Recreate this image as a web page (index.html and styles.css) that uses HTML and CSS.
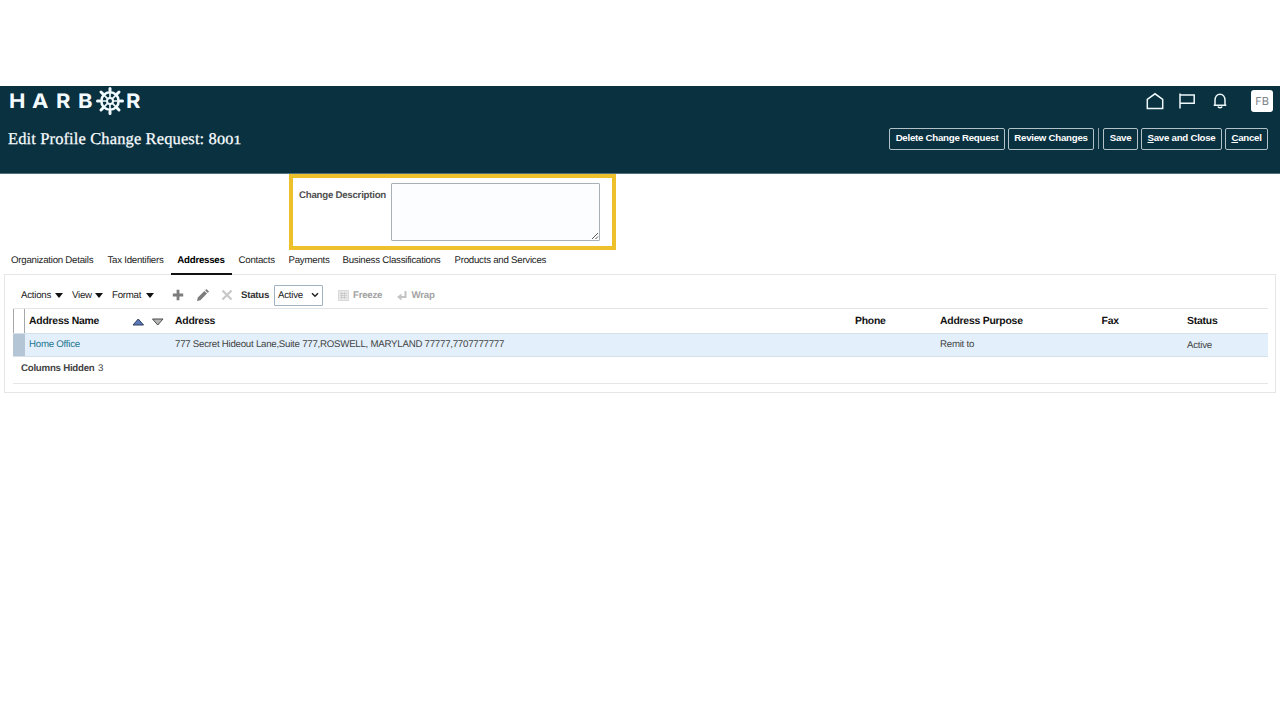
FILE: index.html
```html
<!DOCTYPE html>
<html lang="en">
<head>
<meta charset="utf-8">
<title>Edit Profile Change Request: 8001</title>
<link rel="stylesheet" href="styles.css">
</head>
<body>
<header class="banner">
  <div class="brand-row">
    <div class="logo">
      <span>H</span><span>A</span><span>R</span><span>B</span>
      <svg class="wheel" viewBox="-14 -14 28 28" fill="none" stroke="#f1fbff">
        <circle r="8.7" stroke-width="2.6"/><circle r="3" stroke-width="2"/>
        <path d="M0-13V-3M0 13V3M-13 0H-3M13 0H3M-9.2-9.2l7 7M9.2-9.2l-7 7M-9.2 9.2l7-7M9.2 9.2l-7-7" stroke-width="1.7"/>
        <path d="M0-12.500v2M0 12.500v-2M-12.500 0h2M12.500 0h-2M-9-9l2 2M9-9l-2 2M-9 9l2-2M9 9l-2-2" stroke-width="3" stroke-linecap="round"/>
      </svg>
      <span>R</span>
    </div>
    <nav class="tools">
      <svg class="home" viewBox="0 0 18 18"><path d="M1.3 16.500V7.500L9 1.800l7.700 5.700v9z"/></svg>
      <svg class="flag" viewBox="0 0 18 18"><path d="M2 1.500v15M2 3h14.200v8.200H2"/></svg>
      <svg class="bell" viewBox="0 0 18 18"><path d="M2.700 13.200h12.600M4 13V8.500C4 4.800 6 2.200 9 2.200s5 2.600 5 6.300V13"/><path d="M7 14.500c.3 1.600 3.700 1.600 4 0"/></svg>
      <span class="avatar">FB</span>
    </nav>
  </div>
  <div class="title-row">
    <h1>Edit Profile Change Request: 8<span class="oldstyle">001</span></h1>
    <div class="buttons">
      <button class="w-delete">Delete Change Request</button>
      <button class="w-review">Review Changes</button>
      <i class="separator"></i>
      <button class="w-save">Save</button>
      <button class="w-close"><u>S</u>ave and Close</button>
      <button class="w-cancel"><u>C</u>ancel</button>
    </div>
  </div>
</header>
<section class="description">
  <label for="desc">Change Description</label>
  <div class="field"><textarea id="desc"></textarea>
    <svg class="grip" viewBox="0 0 8 8"><path d="M1 7l6-6M4.500 7L7 4.500"/></svg>
  </div>
</section>
<nav class="tabs">
  <a class="t1">Organization Details</a><a class="t2">Tax Identifiers</a><a class="t3 active">Addresses</a><a class="t4">Contacts</a><a class="t5">Payments</a><a class="t6">Business Classifications</a><a class="t7">Products and Services</a>
</nav>
<main class="panel">
  <div class="toolbar">
    <span class="menu m1">Actions<i></i></span>
    <span class="menu m2">View<i></i></span>
    <span class="menu m3">Format<i></i></span>
    <svg class="add" viewBox="0 0 12 12"><path d="M6 .8v10.400M.8 6h10.400" stroke="#7c7c7c" stroke-width="2.800"/></svg>
    <svg class="edit" viewBox="0 0 12 12"><path d="M0 12l.8-3.400L7.400 2l2.600 2.600-6.600 6.600zM8.100 1.300L9.400 0 12 2.600 10.700 3.900z" fill="#7c7c7c"/></svg>
    <svg class="remove" viewBox="0 0 12 12"><path d="M1.500 1.500l9 9M10.500 1.500l-9 9" stroke="#c9c9c9" stroke-width="2.300"/></svg>
    <b class="status-label">Status</b>
    <span class="select">Active<svg viewBox="0 0 8 6"><path d="M1 1.200l3 3 3-3" fill="none" stroke="#222" stroke-width="1.500"/></svg></span>
    <svg class="freeze" viewBox="0 0 11 11"><path d="M.5.5h10v10H.5z" fill="#e9e9e9" stroke="#d8d8d8"/><path d="M2 3.500h7M2 5.500h7M2 7.500h7M3.500 2v7M6.500 2v7" stroke="#c4c4c4" stroke-width=".7"/></svg>
    <b class="disabled d1">Freeze</b>
    <svg class="wrap-icon" viewBox="0 0 11 11"><path d="M8.500 1v6H3" fill="none" stroke="#c4c4c4" stroke-width="2"/><path d="M0 7l4.500-3.500v7z" fill="#c4c4c4"/></svg>
    <b class="disabled">Wrap</b>
  </div>
  <div class="table">
    <div class="row head">
      <i class="handle"></i>
      <span class="name">Address Name
        <svg class="sort" viewBox="0 0 32 8"><path d="M1 7h10.500L6.250 1z" fill="#5b78b8" stroke="#2f3c5e"/><path d="M20.500 1H31l-5.250 6z" fill="#b5b5b5" stroke="#4b4b4b"/></svg>
      </span>
      <span>Address</span><span>Phone</span><span>Address Purpose</span><span>Fax</span><span>Status</span>
    </div>
    <div class="row data">
      <i class="handle"></i>
      <a>Home Office</a><span>777 Secret Hideout Lane,Suite 777,ROSWELL, MARYLAND 77777,7707777777</span><span></span><span>Remit to</span><span></span><span class="state">Active</span>
    </div>
  </div>
  <div class="hidden-count"><b>Columns Hidden</b><span>3</span></div>
</main>
</body>
</html>
```
FILE: styles.css
```css
* { box-sizing: border-box; }
body { margin: 0; padding-top: 86px; background: #fff; color: #333; font: 9.700px/12px "Liberation Sans", Arial, sans-serif; letter-spacing: -.25px; white-space: nowrap; text-rendering: geometricPrecision; }
svg { display: block; flex: none; }
.banner { height: 88px; background: #0a3140; border-bottom: 1px solid #526f7a; }
.brand-row { display: flex; justify-content: space-between; height: 31px; padding: 0 7px 0 9px; }
.logo { display: grid; grid-template-columns: 23px 24px 22px 18px 29.500px 20px; height: 30px; align-items: center; color: #f4fcff; font: 700 20px/30px Inter, sans-serif; letter-spacing: 0; }
.logo span { transform: scaleX(1.1); transform-origin: left; }
.wheel { width: 28px; height: 28px; }
.tools { display: flex; align-items: center; height: 30px; letter-spacing: 0; }
.tools svg { width: 18px; height: 18px; fill: none; stroke: #eef8fb; stroke-width: 1.500; }
.tools .home { margin-right: 14.500px; }
.tools .flag { margin-right: 14.500px; }
.tools .bell { margin-right: 22.500px; }
.avatar { width: 22px; height: 22px; border-radius: 3px; background: #fff; color: #7d858a; font: 11px/22px Inter, sans-serif; text-align: center; }
.title-row { display: flex; justify-content: space-between; padding: 11px 12px 0 8px; }
h1 { margin: 0; color: #f7fcfd; font: 400 16.500px/22px "Liberation Serif", serif; letter-spacing: .12px; -webkit-text-stroke: .25px #f7fcfd; }
.oldstyle { display: inline-block; font-size: 12.500px; letter-spacing: 0; transform: scaleX(1.3); transform-origin: left; }
.buttons { display: flex; }
button { height: 22px; margin: 0 0 0 3px; padding: 0 0 2px; border: 1px solid #b3c2c8; border-radius: 2px; background: none; color: #fff; font: 700 9.700px/12px "Liberation Sans", Arial, sans-serif; letter-spacing: -.26px; text-align: center; }
.w-delete { width: 116px; }
.w-review { width: 86px; }
.w-save { width: 35px; }
.w-close { width: 81px; }
.w-cancel { width: 43px; }
.separator { width: 1px; height: 21px; margin: 0 1px 0 4px; background: #8fa2aa; }
.description { display: flex; width: 327px; height: 76px; margin: 0 0 0 289px; padding: 5px 0 0 6px; border: 4px solid #edc02c; }
.description label { width: 92px; padding-top: 6px; color: #505050; font-weight: 700; line-height: 13px; }
.field { position: relative; width: 209px; height: 58px; }
textarea { display: block; width: 209px; height: 58px; border: 1px solid #a6b0b5; border-radius: 1px; background: #fcfdfe; resize: none; }
.grip { position: absolute; right: 1px; bottom: 1px; width: 8px; height: 8px; fill: none; stroke: #444; stroke-width: .9; }
.tabs { display: flex; height: 24px; padding: 4px 0 0 11px; color: #222; line-height: 14px; }
.t1 { width: 96.500px; }
.t2 { width: 63px; }
.t3 { width: 61px; height: 21px; text-align: center; }
.active { color: #000; font-weight: 700; border-bottom: 2px solid #111; z-index: 1; }
.t4 { width: 50px; margin-left: 7px; }
.t5 { width: 54px; }
.t6 { width: 112px; }
.panel { width: 1272px; height: 119px; margin-left: 4px; padding: 0 8px; border: 1px solid #e5e6e7; }
.toolbar { display: flex; align-items: center; height: 33px; padding: 7px 0 0 8px; color: #222; line-height: 13px; }
.menu { display: flex; align-items: center; justify-content: space-between; }
.menu i { border: 4px solid transparent; border-top: 5px solid #111; border-bottom: 0; margin-top: 1px; }
.m1 { width: 42px; margin-right: 9px; }
.m2 { width: 31px; margin-right: 9px; }
.m3 { width: 42px; margin-right: 18px; }
.add, .edit, .remove { width: 12px; height: 12px; }
.add { margin-right: 13px; }
.edit { margin-right: 12px; }
.status-label { width: 33px; margin-left: 8px; color: #333; }
.select { display: flex; align-items: center; justify-content: space-between; width: 49px; height: 21px; padding: 0 3px; border: 1px solid #a0b1c1; border-radius: 1px; }
.select svg { width: 8px; height: 6px; }
.freeze { width: 11px; height: 11px; margin-left: 15px; }
.wrap-icon { width: 11px; height: 11px; }
.disabled { color: #a4a4a4; margin-left: 4px; }
.d1 { width: 43.500px; }
.table { width: 1255px; border-top: 1px solid #e2e4e5; }
.row { display: grid; grid-template-columns: 12px 150px 680px 85px 161.500px 85.500px 1fr; align-items: center; }
.head { height: 24px; color: #111; font-size: 10.400px; font-weight: 700; letter-spacing: -.22px; }
.head span { padding-top: 1px; }
.handle { height: 100%; border: 1px solid #a5a8aa; border-width: 0 1px 0 1px; }
.head .name { display: flex; align-items: center; justify-content: space-between; padding: 1px 11px 0 4px; }
.sort { width: 32px; height: 8px; }
.data { height: 24px; background: #e3f0fb; border-top: 1px solid #d4e1e8; border-bottom: 1px solid #d4e1e8; color: #444; }
.data .handle { background: #b4c6d6; border: 0; }
.data a { padding-left: 4px; color: #1f7590; }
.state { padding-top: 1px; }
.hidden-count { width: 1255px; height: 27px; padding: 6px 0 0 8px; border-bottom: 1px solid #e5e6e7; color: #444; }
.hidden-count b { display: inline-block; width: 77px; }
```
